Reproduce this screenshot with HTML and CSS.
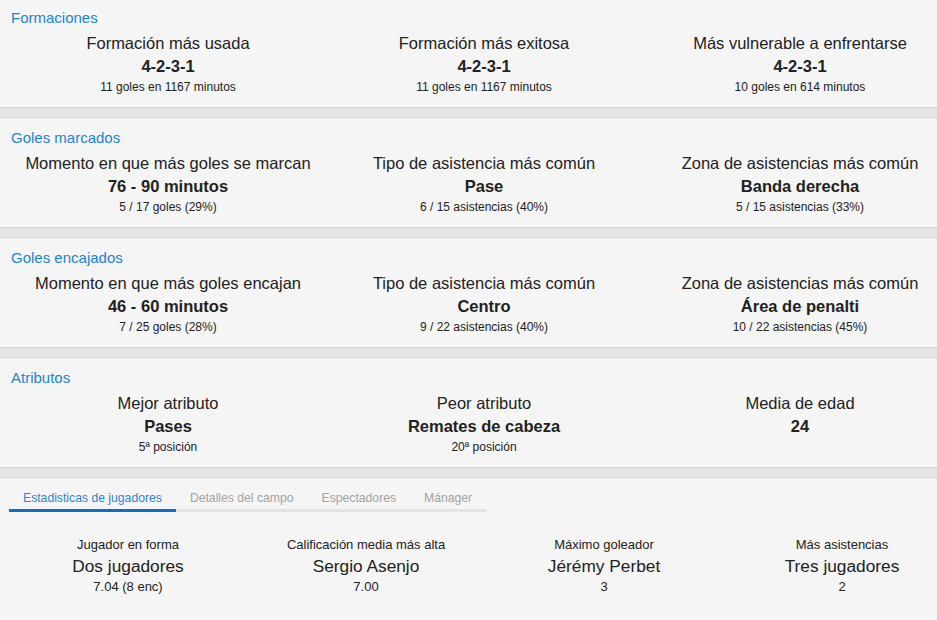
FILE: index.html
```html
<!DOCTYPE html>
<html lang="es">
<head>
<meta charset="utf-8">
<title>Estadísticas</title>
<link rel="stylesheet" href="styles.css">
</head>
<body>
<div class="page">
  <section class="block first">
    <h2 class="block-title">Formaciones</h2>
    <div class="cols3">
      <div class="stat"><div class="label">Formación más usada</div><div class="value">4-2-3-1</div><div class="sub">11 goles en 1167 minutos</div></div>
      <div class="stat"><div class="label">Formación más exitosa</div><div class="value">4-2-3-1</div><div class="sub">11 goles en 1167 minutos</div></div>
      <div class="stat"><div class="label">Más vulnerable a enfrentarse</div><div class="value">4-2-3-1</div><div class="sub">10 goles en 614 minutos</div></div>
    </div>
  </section>
  <div class="sep"></div>
  <section class="block">
    <h2 class="block-title">Goles marcados</h2>
    <div class="cols3">
      <div class="stat"><div class="label">Momento en que más goles se marcan</div><div class="value">76 - 90 minutos</div><div class="sub">5 / 17 goles (29%)</div></div>
      <div class="stat"><div class="label">Tipo de asistencia más común</div><div class="value">Pase</div><div class="sub">6 / 15 asistencias (40%)</div></div>
      <div class="stat"><div class="label">Zona de asistencias más común</div><div class="value">Banda derecha</div><div class="sub">5 / 15 asistencias (33%)</div></div>
    </div>
  </section>
  <div class="sep"></div>
  <section class="block">
    <h2 class="block-title">Goles encajados</h2>
    <div class="cols3">
      <div class="stat"><div class="label">Momento en que más goles encajan</div><div class="value">46 - 60 minutos</div><div class="sub">7 / 25 goles (28%)</div></div>
      <div class="stat"><div class="label">Tipo de asistencia más común</div><div class="value">Centro</div><div class="sub">9 / 22 asistencias (40%)</div></div>
      <div class="stat"><div class="label">Zona de asistencias más común</div><div class="value">Área de penalti</div><div class="sub">10 / 22 asistencias (45%)</div></div>
    </div>
  </section>
  <div class="sep"></div>
  <section class="block">
    <h2 class="block-title">Atributos</h2>
    <div class="cols3">
      <div class="stat"><div class="label">Mejor atributo</div><div class="value">Pases</div><div class="sub">5ª posición</div></div>
      <div class="stat"><div class="label">Peor atributo</div><div class="value">Remates de cabeza</div><div class="sub">20ª posición</div></div>
      <div class="stat"><div class="label">Media de edad</div><div class="value">24</div><div class="sub"></div></div>
    </div>
  </section>
  <div class="sep"></div>
  <section class="block tabs-block">
    <nav class="tabs">
      <span class="tab active">Estadisticas de jugadores</span>
      <span class="tab">Detalles del campo</span>
      <span class="tab">Espectadores</span>
      <span class="tab">Mánager</span>
    </nav>
    <div class="cols4">
      <div class="pstat"><div class="plabel">Jugador en forma</div><div class="pname">Dos jugadores</div><div class="pval">7.04 (8 enc)</div></div>
      <div class="pstat"><div class="plabel">Calificación media más alta</div><div class="pname">Sergio Asenjo</div><div class="pval">7.00</div></div>
      <div class="pstat"><div class="plabel">Máximo goleador</div><div class="pname">Jérémy Perbet</div><div class="pval">3</div></div>
      <div class="pstat"><div class="plabel">Más asistencias</div><div class="pname">Tres jugadores</div><div class="pval">2</div></div>
    </div>
  </section>
</div>
</body>
</html>
```

FILE: styles.css
```css
html, body {
  margin: 0;
  padding: 0;
  background: #f5f5f5;
}
body {
  font-family: "Liberation Sans", Arial, sans-serif;
  color: #222;
  overflow: hidden;
}
.page {
  width: 937px;
  overflow: hidden;
}
.block {
  background: #f5f5f5;
  padding: 10px 0 12px;
}
.block.first {
  margin-top: -2px;
}
.block-title {
  margin: 0 0 4px 11px;
  font-size: 15px;
  line-height: 20px;
  font-weight: normal;
  color: #1a84d6;
}
.cols3 {
  display: grid;
  grid-template-columns: 316px 316px 316px;
  margin-left: 10px;
  width: 948px;
}
.stat {
  text-align: center;
  white-space: nowrap;
}
.label {
  font-size: 16.5px;
  line-height: 22px;
  color: #222;
}
.value {
  font-size: 16.5px;
  line-height: 23px;
  padding-top: 1px;
  font-weight: bold;
  color: #222;
}
.sub {
  font-size: 12px;
  line-height: 18px;
  min-height: 18px;
  color: #222;
  margin-bottom: -1px;
}
.sep {
  height: 9px;
  background: #e3e4e6;
  border-top: 1px solid #d6d7d9;
  border-bottom: 1px solid #d6d7d9;
}
.tabs-block {
  padding: 10px 0 0;
  height: 132px;
}
.tabs {
  display: inline-flex;
  margin-left: 9px;
  border-bottom: 3px solid #e3e3e3;
}
.tab {
  font-size: 12.2px;
  line-height: 16px;
  padding: 0 14px 3px;
  color: #a3a3a3;
  margin-bottom: -3px;
  border-bottom: 3px solid transparent;
  white-space: nowrap;
}
.tab.active {
  color: #2a86d4;
  border-bottom-color: #0a72c6;
}
.cols4 {
  display: grid;
  grid-template-columns: 238px 238px 238px 238px;
  margin: 23px 0 0 9px;
  width: 952px;
}
.pstat {
  text-align: center;
  white-space: nowrap;
}
.plabel {
  font-size: 13px;
  line-height: 20px;
  color: #222;
}
.pname {
  font-size: 17.3px;
  line-height: 22px;
  color: #222;
}
.pval {
  font-size: 13px;
  line-height: 20px;
  color: #222;
}
```
